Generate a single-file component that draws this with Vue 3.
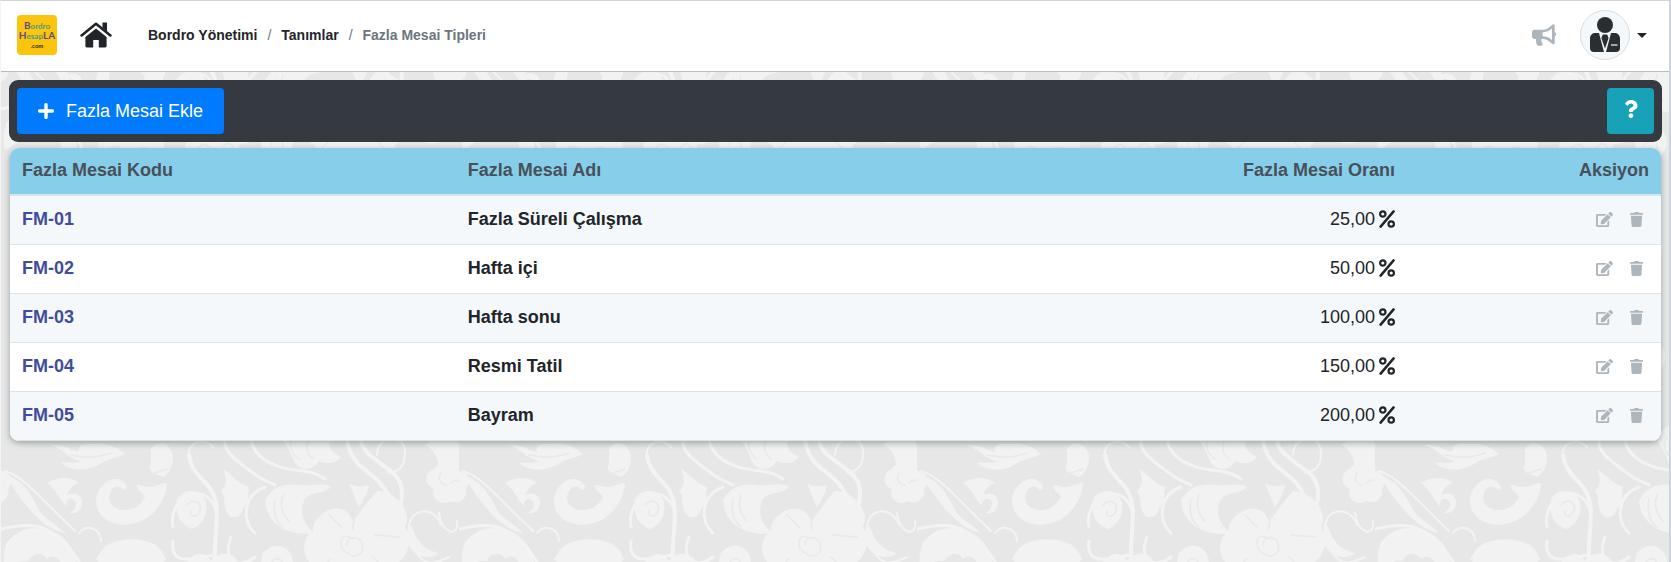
<script setup>
const rows = [
  { code: 'FM-01', name: 'Fazla Süreli Çalışma', rate: '25,00' },
  { code: 'FM-02', name: 'Hafta içi', rate: '50,00' },
  { code: 'FM-03', name: 'Hafta sonu', rate: '100,00' },
  { code: 'FM-04', name: 'Resmi Tatil', rate: '150,00' },
  { code: 'FM-05', name: 'Bayram', rate: '200,00' },
]
</script>

<template>
  <div class="page">
    <svg class="wallpaper" width="100%" height="100%" aria-hidden="true">
      <defs>
        <pattern id="damask" width="458" height="420" patternUnits="userSpaceOnUse">
          <g fill="#f2f2f2">
            <path d="M50 24c12 4 18 14 30 16-8 4-14 0-20 2 12 10 30 8 42-1 8-4 14-4 22-8-8-8-22-12-32-10-10-2-16 2-14 8-10-2-14-8-28-7z" />
            <path d="M46 62c12-7 24-6 32 0-6 2-10 6-12 12 8-4 16 0 15 9-1 7-6 10-12 9 6-4 8-9 4-13-4-3-8 0-8 6-8-8-10-17-19-23z" />
            <path d="M126 66c-4-10-16-10-22-4-12 10-12 26 0 36 14 10 36 6 48-6 8-8 14-20 14-30-8 0-10 4-18 4-4 0-8-2-12-2 0 6 6 8 8 12-4 8-12 14-22 13-12-1-17-11-12-19 2-5 8-6 12-2 2 2 4 0 4-2z" />
            <path d="M150 28c8-10 18-6 22 6 0 12-4 18-10 22-8-4-16-4-12-14z" />
            <path d="M176 78c8-12 26-10 29 4 2 12-4 22-14 26-8-3-18-10-15-30z" />
            <path d="M222 48c10 6 14 14 26 18-2 8 2 12-6 22-2 6-4 9-12 8-10-8-4-20-10-26 6-6 6-12 2-22z" />
            <path d="M282 20c6 6 8 14 12 22 6 8 18 8 24-2 8 4 18 2 22-4-8-4-12-8-12-14 8-4 10-12 4-18h-38c-8 6-12 10-12 16z" />
            <path d="M264 80c6-14 20-18 34-16 12 2 24-4 32 2-8 8-20 4-26 12-6 12-2 26 10 34-22 4-48-6-50-32z" />
            <path d="M424 24c8 2 16 16 12 26 8-4 14 2 22 0V22c-14-12-24-6-34 2z" />
            <path d="M352 100c-10-26-42-6-40 10-14 8-10 32 2 34 0 20 28 20 36 6 10 16 42 14 44-6 14-8 18-26 10-38 8-14-8-36-28-36-8 8-14 18-24 30z" />
            <path d="M348 62c6 4 12 4 20 2-2 10-6 16-10 22-4-8-6-14-10-24z" />
            <path d="M433 48c6-10 20-8 22 2 12-2 16 10 10 18 2 10-8 16-16 12-8 6-20-2-16-12-10-4-10-16 0-20z" />
            <path d="M-25 48c6-10 20-8 22 2 12-2 16 10 10 18 2 10-8 16-16 12-8 6-20-2-16-12-10-4-10-16 0-20z" />
            <path d="M4 54c20 6 26 20 36 38 10 10 16 12 24 20-22-4-40-26-60-58z" />
            <path d="M4 150c-8-34 20-50 46-40 22 8 30 32 24 54-8-2-4-14-14-16 2-10-8-16-14-10-4-8-16-6-18 2-12-2-18 6-24 10z" />
            <path d="M100 130c10-16 54-16 62 2 4 12-2 28-10 34h-44c-10-8-14-24-8-36z" />
            <path d="M184 144c8-14 20-14 26-4 8-12 26-8 28 4 2 14-14 24-28 20-12 6-22 0-26-20z" />
            <path d="M262 132c12-14 30-6 30 10-2 14-14 20-24 16-8-8-10-16-6-26z" />
            <path d="M410 104c6 14 10 24 28 28-6 6-20 6-28-4-6-8-6-16 0-24z" />
            <path d="M60 190c30-10 50 10 44 36 20-16 46 4 40 26-30-8-50 20-76 8-30-6-32-46-8-70z" />
            <path d="M200 200c30-20 64-8 60 20 26 0 36 30 18 50-24-12-46 0-66-8-26-10-32-40-12-62z" />
            <path d="M350 220c20-30 60-18 62 8 22 16 10 48-16 48-20 12-54-6-46-56z" />
            <path d="M70 320c10-28 50-30 58-4 24 4 24 38 2 46-30 14-70-2-60-42z" />
            <path d="M230 330c20-20 52-14 54 12 18 20-8 44-30 34-20-4-32-22-24-46z" />
          </g>
          <g fill="none" stroke="#f3f3f3" stroke-width="4" stroke-linecap="round">
            <path d="M188 34c2 16 12 22 20 32 12 16 7 34 6 60s2 20-2 34" />
            <path d="M188 34c-2-12 14-18 24-8" stroke-width="2" />
            <path d="M172 106c-6-30 34-50 44-14" stroke-width="3" />
            <path d="M224 20c-2 12 18 24 28 32s14 8 22 12M252 12c-6 12 6 26 22 32 16 8 34 2 50 14" stroke-width="3" />
            <path d="M346 20c6 32 30 28 42 56 5 8 7 14 10 22M360 20c2 14 22 22 34 34 8 8 8 18 6 28" />
            <path d="M376 34c0-20 28-22 28-2 0 16-8 18-16 20" stroke-width="2" />
            <path d="M172 120c-4 28 26 16 42 14M230 116c-10 26 10 32 24 20M264 66c-22 8-24 34-10 46" stroke-width="3" />
            <path d="M6 124c14-20 48-20 66 8 12 16 12 24 12 38M0 108c32-8 48-2 60 12" stroke-width="3" />
            <path d="M78 112c8-10 22-4 22 8M96 138c16-24 54-22 68 0" stroke-width="2" />
            <path d="M408 110c-2-24 26-26 32-6M438 92c2 20 20 26 18 8M416 132c8 14 20 10 32 4" stroke-width="2" />
            <path d="M4 50c20 6 38 30 70 60" stroke-width="2" />
            <path d="M20 190c40 30 20 60 60 90s20 60-10 80M160 190c30 40 10 70 60 100s60 50 30 100M300 190c50 30 40 80 90 110s20 70-20 90" stroke-width="6" />
          </g>
          <g fill="none" stroke="#e9e9e9" stroke-width="1.500" stroke-linecap="round">
            <path d="M70 34c12 2 24 4 40-2M148 54l18-6M292 16c-6 10 0 18 6 22M310 14c-6 10-6 18 2 24" />
            <path d="M274 78c-2 12 0 22 8 28M282 74c-4 12 0 20 6 26M186 84c6-8 18-2 12 8-4 6-10 2-8-2" />
            <path d="M352 118c-14-10-16 10-6 14 10 8 20-2 14-12-6-6-14-4-14 4M352 108c0-12 4-20 12-26M330 138l-12 12M374 114l24 2M372 136l14 14M340 106l-12-12" />
            <path d="M440 52c-4 6 0 12 6 12M450 62c6-6 10-2 10 4M106 150c8-10 14 0 22 0s14-10 24 2M196 150c4-12 16-6 12 4M222 146c6-8 14 0 8 8M270 144c2-10 14-8 12 4" />
          </g>
        </pattern>
      </defs>
      <rect width="100%" height="100%" fill="#e7e7e7" />
      <rect width="100%" height="100%" fill="url(#damask)" />
    </svg>

    <header class="topbar">
      <a class="logo" href="#" aria-label="Bordro Hesapla">
        <span><b>B</b>ordro</span>
        <span><b>H</b>esap<b>LA</b></span>
        <span class="tld">.com</span>
      </a>
      <a class="home" href="#" aria-label="Ana sayfa">
        <svg width="32" height="26" viewBox="0 0 32 26" fill="#212529">
          <path d="M16 6.400 5.400 15v9c0 .8.600 1.400 1.400 1.400h6.400V18h5.600v7.400h6.400c.8 0 1.400-.6 1.400-1.400v-9z" />
          <path d="M1.600 13.400 16 1.800l14.400 11.600" fill="none" stroke="#212529" stroke-width="2.600" stroke-linecap="round" stroke-linejoin="round" />
          <path d="M22.500.4H27v9.200L22.500 6z" />
        </svg>
      </a>
      <nav aria-label="Konum">
        <ol class="crumbs">
          <li><a href="#">Bordro Yönetimi</a></li>
          <li><a href="#">Tanımlar</a></li>
          <li class="current" aria-current="page">Fazla Mesai Tipleri</li>
        </ol>
      </nav>
      <div class="tools">
        <button class="plain" type="button" aria-label="Duyurular">
          <svg width="24" height="22" viewBox="0 0 576 512" fill="#adb5bd"><path d="M576 240c0-23.630-12.950-44.040-32-55.120V32.010C544 23.260 537.020 0 512 0c-7.120 0-14.190 2.380-19.980 7.020l-85.030 68.030C364.280 109.190 310.660 128 256 128H64c-35.350 0-64 28.650-64 64v96c0 35.350 28.650 64 64 64h33.700c-1.390 10.480-2.180 21.140-2.180 32 0 39.770 9.260 77.350 25.560 110.940 5.190 10.690 16.520 17.060 28.400 17.060h74.280c26.050 0 41.690-29.840 25.900-50.560-16.400-21.520-26.150-48.360-26.150-77.440 0-11.110 1.620-21.790 4.410-32H256c54.660 0 108.280 18.810 150.980 52.950l85.030 68.030a32.023 32.023 0 0 0 19.980 7.020c24.920 0 32-22.780 32-32V295.130C563.050 284.040 576 263.630 576 240zm-96 141.420l-33.050-26.440C392.950 311.780 325.120 288 256 288v-96c69.120 0 136.950-23.780 190.950-66.980L480 98.580v282.840z" /></svg>
        </button>
        <button class="plain account" type="button" aria-label="Hesap menüsü">
          <span class="avatar">
            <svg width="30" height="36" viewBox="0 0 30 36" fill="#2b2e31">
              <circle cx="15" cy="8" r="8" />
              <path d="M5.500 16H9l5 19H4a4 4 0 0 1-4-4v-9.500C0 18 2.500 16 5.500 16zM24.500 16H21l-5 19h10a4 4 0 0 0 4-4v-9.500c0-3.500-2.500-5.500-5.500-5.500z" />
              <path d="M12.800 17.600h4.400l1.400 3.400-1.800 5.600L15 31.500l-1.800-4.900-1.800-5.600z" />
              <path d="M21 28h6.500" stroke="#f4f8fb" stroke-width="1.200" />
            </svg>
          </span>
          <svg width="10" height="5" viewBox="0 0 10 5" fill="#212529"><path d="M0 0h10L5 5z" /></svg>
        </button>
      </div>
    </header>

    <main>
      <div class="actionbar">
        <button class="add" type="button">
          <svg width="16" height="18" viewBox="0 0 448 512" fill="#fff"><path d="M416 208H272V64c0-17.670-14.330-32-32-32h-32c-17.670 0-32 14.330-32 32v144H32c-17.670 0-32 14.330-32 32v32c0 17.670 14.330 32 32 32h144v144c0 17.670 14.330 32 32 32h32c17.670 0 32-14.330 32-32V304h144c17.670 0 32-14.330 32-32v-32c0-17.670-14.330-32-32-32z" /></svg>
          Fazla Mesai Ekle
        </button>
        <button class="help" type="button" aria-label="Yardım">
          <svg width="14" height="18" viewBox="0 0 384 512" fill="#fff"><path d="M202.021 0C122.202 0 70.503 32.703 29.914 91.026c-7.363 10.580-5.093 25.086 5.178 32.874l43.138 32.709c10.373 7.865 25.132 6.026 33.253-4.148 25.049-31.381 43.630-49.449 82.757-49.449 30.764 0 68.816 19.799 68.816 49.631 0 22.552-18.617 34.134-48.993 51.164-35.423 19.860-82.299 44.576-82.299 106.405V320c0 13.255 10.745 24 24 24h72.471c13.255 0 24-10.745 24-24v-5.773c0-42.860 125.268-44.645 125.268-160.627C377.504 66.256 286.902 0 202.021 0zM192 373.459c-38.196 0-69.271 31.075-69.271 69.271 0 38.195 31.075 69.270 69.271 69.270s69.271-31.075 69.271-69.271-31.075-69.270-69.271-69.270z" /></svg>
        </button>
      </div>

      <div class="card">
        <table>
          <thead>
            <tr>
              <th class="c-code" scope="col">Fazla Mesai Kodu</th>
              <th scope="col">Fazla Mesai Adı</th>
              <th class="c-rate" scope="col">Fazla Mesai Oranı</th>
              <th class="c-act" scope="col">Aksiyon</th>
            </tr>
          </thead>
          <tbody>
            <tr v-for="r in rows" :key="r.code">
              <td><a class="code" href="#">{{ r.code }}</a></td>
              <td class="name">{{ r.name }}</td>
              <td class="c-rate">
                <span class="rate">{{ r.rate }}
                  <svg width="16" height="18" viewBox="0 0 16 18" fill="none" stroke="#212529" role="img" aria-label="yüzde">
                    <circle cx="3.800" cy="4" r="2.700" stroke-width="2.200" />
                    <circle cx="12.200" cy="14" r="2.700" stroke-width="2.200" />
                    <path d="M14.600 1.400 1.600 16.600" stroke-width="2.500" stroke-linecap="round" />
                  </svg>
                </span>
              </td>
              <td class="c-act">
                <span class="acts">
                  <button class="plain" type="button" :aria-label="`${r.code} düzenle`">
                    <svg width="17" height="15" viewBox="0 0 576 512" fill="#adb5bd"><path d="M402.600 83.200l90.200 90.200c3.800 3.800 3.800 10 0 13.800L274.400 405.600l-92.800 10.300c-12.400 1.400-22.900-9.100-21.500-21.500l10.300-92.800L388.800 83.200c3.800-3.800 10-3.800 13.800 0zm162-22.900l-48.800-48.800c-15.200-15.200-39.900-15.200-55.200 0l-35.400 35.400c-3.800 3.800-3.800 10 0 13.800l90.200 90.200c3.800 3.800 10 3.800 13.800 0l35.400-35.400c15.200-15.300 15.200-40 0-55.200zM384 346.200V448H64V128h229.800c3.200 0 6.200-1.300 8.500-3.500l40-40c7.600-7.600 2.200-20.500-8.500-20.500H48C21.500 64 0 85.500 0 112v352c0 26.500 21.500 48 48 48h352c26.500 0 48-21.500 48-48V306.200c0-10.700-12.900-16-20.500-8.500l-40 40c-2.200 2.300-3.500 5.300-3.500 8.500z" /></svg>
                  </button>
                  <button class="plain" type="button" :aria-label="`${r.code} sil`">
                    <svg width="13" height="15" viewBox="0 0 448 512" fill="#adb5bd"><path d="M432 32H312l-9.400-18.700A24 24 0 0 0 281.100 0H166.800a23.720 23.720 0 0 0-21.400 13.300L136 32H16A16 16 0 0 0 0 48v32a16 16 0 0 0 16 16h416a16 16 0 0 0 16-16V48a16 16 0 0 0-16-16zM53.200 467a48 48 0 0 0 47.900 45h245.800a48 48 0 0 0 47.900-45L416 128H32z" /></svg>
                  </button>
                </span>
              </td>
            </tr>
          </tbody>
        </table>
      </div>
    </main>
  </div>
</template>

<style>
body { background: #e7e7e7; }
</style>

<style scoped>
.page {
  position: relative;
  box-sizing: border-box;
  min-height: 100vh;
  border-top: 1px solid #d5d5d5;
  border-left: 1px solid #f4f4f4;
  border-right: 2px solid #ced4da;
  font-family: "Liberation Sans", Arial, sans-serif;
  font-size: 18px;
  line-height: 26px;
  color: #212529;
}
.page * { box-sizing: border-box; }
.wallpaper { position: absolute; inset: 0; }
svg { display: block; flex: none; }
a { color: inherit; text-decoration: none; }
button { font: inherit; border: 0; cursor: pointer; }
.plain { background: none; padding: 0; }

.topbar {
  position: relative;
  display: flex;
  align-items: center;
  height: 71px;
  padding: 0 22px 2px 16px;
  background: #fff;
  border-bottom: 1px solid #b9bdc0;
}
.logo {
  display: flex;
  flex-direction: column;
  align-items: center;
  justify-content: center;
  width: 40px;
  height: 40px;
  border-radius: 4px;
  background: #fcc40c;
  font-family: Lato, sans-serif;
  font-weight: 700;
  font-size: 8px;
  line-height: 9px;
  color: #3f9f86;
}
.logo b { font-size: 10px; font-weight: 700; color: #5b4a86; }
.logo .tld { font-size: 6px; color: #2b2b20; }
.home { margin-left: 23px; }
.crumbs {
  display: flex;
  margin: 0 0 0 36px;
  padding: 0;
  list-style: none;
  font-size: 14px;
  font-weight: 700;
  line-height: 20px;
}
.crumbs li + li::before { content: "/"; margin: 0 10px; color: #6c757d; font-weight: 400; }
.crumbs .current { color: #6c757d; }
.tools { display: flex; align-items: center; gap: 24px; margin-left: auto; }
.account { display: flex; align-items: center; gap: 7px; }
.avatar {
  display: flex;
  align-items: center;
  justify-content: center;
  width: 50px;
  height: 50px;
  border: 1px solid #d9dee3;
  border-radius: 50%;
  background: #f4f8fb;
}

main { position: relative; padding: 8px 7px 0 8px; }
.actionbar {
  display: flex;
  justify-content: space-between;
  padding: 8px;
  border-radius: 9px;
  background: #343a40;
}
.add {
  display: flex;
  align-items: center;
  gap: 12px;
  height: 46px;
  padding: 0 21px;
  border-radius: 4px;
  background: #007bff;
  color: #fff;
}
.help {
  display: flex;
  align-items: center;
  justify-content: center;
  width: 47px;
  height: 46px;
  padding: 0 0 4px;
  border-radius: 4px;
  background: #17a2b8;
}

.card {
  margin: 6px 1px 0;
  border-radius: 9px;
  overflow: hidden;
  background: #fff;
  box-shadow: 0 2px 6px rgba(60, 70, 75, 0.45);
}
table { width: 100%; border-collapse: separate; border-spacing: 0; table-layout: fixed; }
th, td { padding: 0 12px 2px; text-align: left; }
th { height: 48px; background: #87ceeb; border-bottom: 2px solid #d5e6ef; color: #495057; }
td { height: 49px; border-bottom: 1px solid #dee2e6; }
tbody tr:nth-child(odd) { background: #f4f8fb; }
.c-code { width: 27%; }
th.c-rate { width: 36%; }
th.c-act { width: 254px; }
.c-rate, .c-act { text-align: right; }
.code { color: #434c9c; font-weight: 700; }
.name { font-weight: 700; }
.rate { display: inline-flex; align-items: center; gap: 4px; }
.acts { display: flex; justify-content: flex-end; gap: 17px; padding-right: 6px; }
</style>
